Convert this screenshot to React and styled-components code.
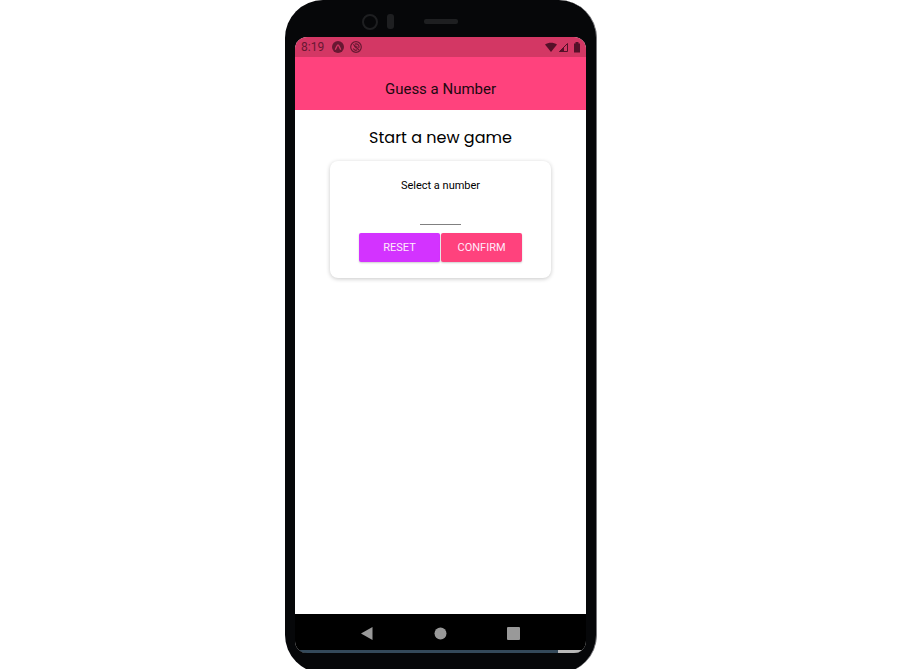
import React, { useState } from "react";
import styled, { createGlobalStyle } from "styled-components";

const GlobalStyle = createGlobalStyle`
  * { box-sizing: border-box; }
  body {
    margin: 0;
    background: #fff;
    font-family: Roboto, "Liberation Sans", sans-serif;
    color: #000;
  }
`;

const Page = styled.div`
  display: flex;
  justify-content: center;
  height: 100vh;
  padding-right: 15px;
  overflow: hidden;
`;

const Phone = styled.div`
  display: flex;
  flex: none;
  flex-direction: column;
  width: 312px;
  height: calc(100vh + 4px);
  padding: 0 10px 20px;
  background: #060709;
  border-right: 1px solid #77777b;
  border-radius: 38px;
`;

const Bezel = styled.div`
  display: flex;
  flex: none;
  align-items: center;
  height: 37px;
  padding: 6px 0 0 67px;
`;

const Camera = styled.span`
  width: 16px;
  height: 16px;
  border: 2px solid #1e1f21;
  border-radius: 50%;
`;

const Sensor = styled.span`
  width: 7px;
  height: 15px;
  margin-left: 9px;
  background: #1e1f21;
  border-radius: 3px;
`;

const Speaker = styled.span`
  width: 34px;
  height: 5px;
  margin-left: 30px;
  background: #1e1f21;
  border-radius: 2px;
`;

const Screen = styled.div`
  display: flex;
  flex: 1;
  flex-direction: column;
  background: #fff;
  border-radius: 12px;
  overflow: hidden;
`;

const StatusBar = styled.div`
  display: flex;
  align-items: center;
  height: 20px;
  padding: 0 4px 0 6px;
  background: #d33764;
  color: #681832;
  font-size: 12px;
  line-height: 20px;

  svg { display: block; }
`;

const Time = styled.span`
  width: 31px;
`;

const Notifications = styled.div`
  display: flex;
  flex: 1;
  gap: 6px;
`;

const Signals = styled.div`
  display: flex;
  align-items: center;
  gap: 1px;
  color: #541129;
`;

const Header = styled.header`
  display: flex;
  align-items: center;
  justify-content: center;
  height: 53px;
  padding-top: 11px;
  background: #ff427d;
`;

const HeaderTitle = styled.h1`
  margin: 0;
  color: #210810;
  font-size: 15px;
  font-weight: 400;
  line-height: 20px;
`;

const Main = styled.main`
  display: flex;
  flex: 1;
  flex-direction: column;
  align-items: center;
  padding: 16px 35px;
`;

const Title = styled.h2`
  margin: 0 0 11px;
  font-family: Poppins, Inter, sans-serif;
  font-size: 16px;
  font-weight: 400;
  line-height: 24px;
  white-space: nowrap;
`;

const Card = styled.form`
  display: flex;
  flex-direction: column;
  align-items: center;
  width: 100%;
  padding: 17px 16px 16px;
  border-radius: 8px;
  background: #fff;
  box-shadow: 0 1px 4px rgba(0, 0, 0, 0.22);
`;

const Label = styled.label`
  font-size: 11px;
  line-height: 16px;
`;

const NumberInput = styled.input`
  width: 41px;
  height: 22px;
  margin: 9px 0 8px;
  padding: 0;
  border: 0;
  border-bottom: 1px solid #808080;
  background: transparent;
  font: 11px Roboto, sans-serif;
  text-align: center;
  outline: 0;
`;

const Actions = styled.div`
  display: flex;
  gap: 1px;
`;

const Button = styled.button`
  width: 81px;
  height: 29px;
  padding: 0;
  border: 0;
  border-radius: 2px;
  background: ${({ $color }) => $color};
  box-shadow: 0 1px 2px rgba(0, 0, 0, 0.2);
  color: #ffeafa;
  font: 11px Roboto, sans-serif;
`;

const NavBar = styled.nav`
  display: flex;
  align-items: center;
  justify-content: space-between;
  height: 39px;
  padding: 2px 64px 0;
  background: #000;
  border-bottom: 3px solid;
  border-image: linear-gradient(90deg, #34495a 90%, #b9b9b9 90%) 1;
`;

const NavButton = styled.button`
  display: grid;
  place-items: center;
  width: 17px;
  height: 17px;
  padding: 0;
  border: 0;
  background: transparent;
  color: #999;
`;

export default function App() {
  const [number, setNumber] = useState("");
  return (
    <Page>
      <GlobalStyle />
      <Phone>
        <Bezel>
          <Camera />
          <Sensor />
          <Speaker />
        </Bezel>
        <Screen>
          <StatusBar>
            <Time>8:19</Time>
            <Notifications>
              <svg width="12" height="12" viewBox="0 0 12 12">
                <circle cx="6" cy="6" r="6" fill="currentColor" />
                <path d="M3.2 8.7C4.300 7.200 5 3.900 6 3.900S7.700 7.200 8.800 8.700" fill="none" stroke="#d33764" strokeWidth="1.400" />
              </svg>
              <svg width="12" height="12" viewBox="0 0 12 12" fill="none" stroke="currentColor">
                <circle cx="6" cy="6" r="5.300" strokeWidth="1.200" />
                <path d="M3.300 7.500A3 3 0 0 0 7.200 8.900M4.800 3.100A3 3 0 0 1 8.800 7M3.300 3.300l5.700 5.700" strokeWidth="1.200" />
                <path d="M4.300 5.200l1.700 2.200M6 4.600l1.700 1.700" />
              </svg>
            </Notifications>
            <Signals>
              <svg width="12" height="11" viewBox="0 0 12 11">
                <path d="M0 2.500C3.500 0 8.500 0 12 2.500L6 10z" fill="currentColor" />
              </svg>
              <svg width="11" height="11" viewBox="0 0 11 11">
                <path d="M1.500 9.500L9.500 1.500V9.500z" fill="none" stroke="currentColor" />
                <path d="M1 10L6 5V10z" fill="currentColor" />
              </svg>
              <svg width="12" height="11" viewBox="0 0 12 11">
                <path d="M4 1.500H5.500V0H8.500V1.500H10V10.500H4z" fill="currentColor" />
              </svg>
            </Signals>
          </StatusBar>
          <Header>
            <HeaderTitle>Guess a Number</HeaderTitle>
          </Header>
          <Main>
            <Title>Start a new game</Title>
            <Card onSubmit={(event) => event.preventDefault()}>
              <Label htmlFor="number">Select a number</Label>
              <NumberInput
                id="number"
                inputMode="numeric"
                maxLength={2}
                value={number}
                onChange={(event) => setNumber(event.target.value.replace(/\D/g, ""))}
              />
              <Actions>
                <Button type="button" $color="#d333ff" onClick={() => setNumber("")}>RESET</Button>
                <Button type="submit" $color="#ff427d">CONFIRM</Button>
              </Actions>
            </Card>
          </Main>
          <NavBar>
            <NavButton aria-label="Back">
              <svg width="17" height="15" viewBox="0 0 17 15"><path d="M2 7.500L13.500 1V14z" fill="currentColor" /></svg>
            </NavButton>
            <NavButton aria-label="Home">
              <svg width="13" height="13" viewBox="0 0 13 13"><circle cx="6.500" cy="6.500" r="6" fill="currentColor" /></svg>
            </NavButton>
            <NavButton aria-label="Recent apps">
              <svg width="13" height="13" viewBox="0 0 13 13"><rect width="13" height="13" rx="1" fill="currentColor" /></svg>
            </NavButton>
          </NavBar>
        </Screen>
      </Phone>
    </Page>
  );
}
